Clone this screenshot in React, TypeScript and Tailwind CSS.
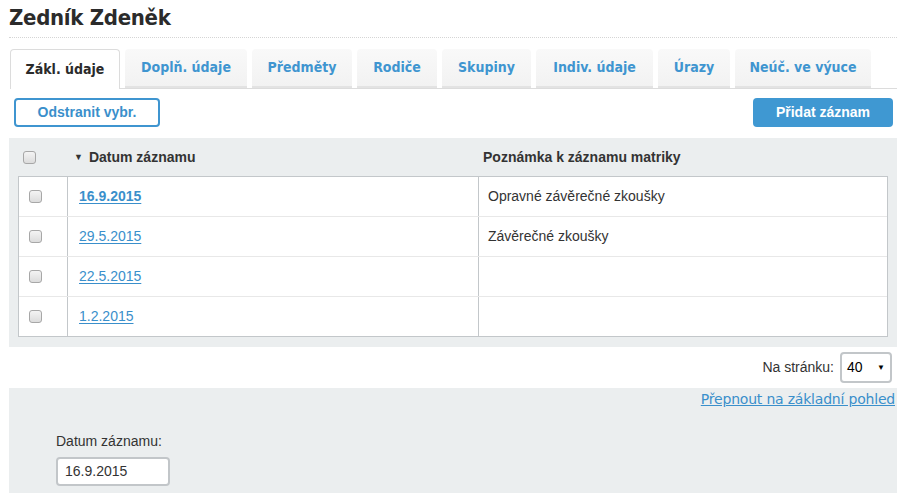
import React from "react"

const tabs = [
  { label: "Zákl. údaje", w: "w-[110px]" },
  { label: "Dopl\u0148. údaje", w: "w-[122px]" },
  { label: "Předměty", w: "w-[100px]" },
  { label: "Rodiče", w: "w-[80px]" },
  { label: "Skupiny", w: "w-[89px]" },
  { label: "Indiv. údaje", w: "w-[117px]" },
  { label: "Úrazy", w: "w-[72px]" },
  { label: "Neúč. ve výuce", w: "w-[136px]" },
]

const rows = [
  { date: "16.9.2015", note: "Opravné závěrečné zkoušky", bold: true },
  { date: "29.5.2015", note: "Závěrečné zkoušky" },
  { date: "22.5.2015", note: "" },
  { date: "1.2.2015", note: "" },
]

function Check() {
  return (
    <span className="inline-block w-[13px] h-[13px] rounded-[3px] border border-[#a7a7a7] bg-gradient-to-b from-[#f4f4f4] to-[#dcdcdc]" />
  )
}

export default function App() {
  return (
    <div className="w-[899px] h-[493px] overflow-hidden bg-white font-['Liberation_Sans',Arial,sans-serif] text-[14px] text-[#333]">
      <div className="pl-[9px] pr-[2px]">
        {/* Title */}
        <h1 className="pt-[3px] h-[38px] text-[22px] leading-[30px] font-bold text-[#2b2b2b] font-['DejaVu_Sans_Condensed','DejaVu_Sans',sans-serif] tracking-[-0.3px] border-b border-dotted border-[#d5d5d5]">
          Zedník Zdeněk
        </h1>

        {/* Tabs */}
        <div className="mt-[11px] ml-[1px] flex gap-[5px] h-[40px] border-b border-[#dcdcdc] font-['DejaVu_Sans_Condensed','DejaVu_Sans',sans-serif] text-[14px] font-bold">
          {tabs.map((t, i) =>
            i === 0 ? (
              <div
                key={t.label}
                className={`${t.w} h-[40px] flex items-center justify-center bg-white border border-b-0 border-[#dcdcdc] rounded-t-[4px] text-[#2b2b2b] -mb-px`}
              >
                {t.label}
              </div>
            ) : (
              <div
                key={t.label}
                className={`${t.w} h-[39px] flex items-center justify-center bg-gradient-to-b from-[#f9f9f9] to-[#f2f2f2] border-b-2 border-[#e3e3e3] rounded-t-[4px] text-[#3f95d0]`}
              >
                {t.label}
              </div>
            )
          )}
        </div>

        {/* Buttons */}
        <div className="flex justify-between items-center mt-[9px] pl-[5px] pr-[4px]">
          <button className="w-[146px] h-[29px] rounded-[4px] border-2 border-[#3f95d0] bg-white text-[#3a8fcb] font-bold text-[14px]">
            Odstranit vybr.
          </button>
          <button className="w-[140px] h-[29px] rounded-[4px] bg-[#3f98d2] text-white font-bold text-[14px]">
            Přidat záznam
          </button>
        </div>

        {/* Table area */}
        <div className="mt-[11px] bg-[#ebeeef] pt-[1px] pb-[10px] px-[9px] w-[888px]">
          <div className="flex h-[37px] items-center font-bold text-[#333]">
            <div className="w-[50px] pl-[5px] flex items-center">
              <Check />
            </div>
            <div className="w-[411px] pl-[6px] flex items-center">
              <span className="text-[9px] mr-[6px]">▼</span>Datum záznamu
            </div>
            <div className="pl-[4px]">Poznámka k záznamu matriky</div>
          </div>
          <div className="bg-white border border-[#c3c7ca] w-[870px]">
            {rows.map((r, i) => (
              <div
                key={r.date}
                className={`flex ${i > 0 ? "h-[40px] border-t border-[#e8e8e8]" : "h-[39px]"}`}
              >
                <div className="w-[49px] border-r border-[#c3c7ca] flex items-center pl-[10px]">
                  <Check />
                </div>
                <div className="w-[411px] border-r border-[#c3c7ca] flex items-center pl-[11px]">
                  <a
                    href="#"
                    className={`text-[#3a8fcb] underline underline-offset-[2px] ${r.bold ? "font-bold" : ""}`}
                  >
                    {r.date}
                  </a>
                </div>
                <div className="flex items-center pl-[9px] text-[#333]">{r.note}</div>
              </div>
            ))}
          </div>
        </div>

        {/* Per page */}
        <div className="flex justify-end items-center h-[41px] pr-[5px] gap-[6px]">
          <span className="text-[#333]">Na stránku:</span>
          <div className="w-[52px] h-[31px] rounded-[4px] border-2 border-[#c2c6c9] bg-white flex items-center justify-between pl-[5px] pr-[5px]">
            <span className="text-black">40</span>
            <span className="text-[8px] text-black">▼</span>
          </div>
        </div>

        {/* Detail area */}
        <div className="bg-[#ebeeef] w-[888px] h-[110px]">
          <div className="flex justify-end pr-[2px] pt-[1px]">
            <a
              href="#"
              className="text-[#3a8fcb] underline text-[14px] font-['DejaVu_Sans',sans-serif] tracking-[-0.2px]"
            >
              Přepnout na základní pohled
            </a>
          </div>
          <div className="pl-[47px] pt-[21px]">
            <div className="text-[14px] text-[#333] mb-[5px]">Datum záznamu:</div>
            <div className="w-[114px] h-[29px] rounded-[4px] border-2 border-[#c2c6c9] bg-white flex items-center pl-[7px] text-[#333]">
              16.9.2015
            </div>
          </div>
        </div>
      </div>
    </div>
  )
}
